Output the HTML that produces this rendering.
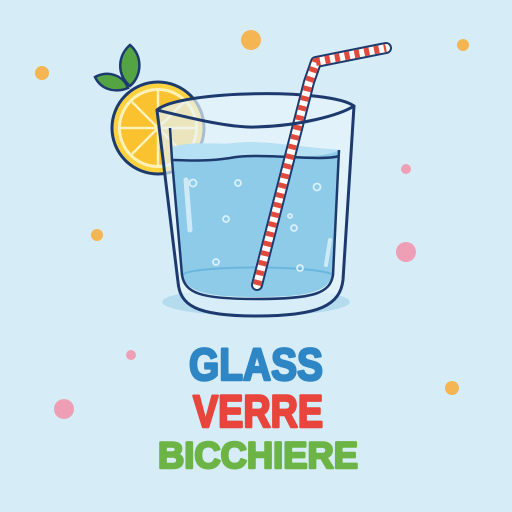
<!DOCTYPE html>
<html><head><meta charset="utf-8"><style>
html,body{margin:0;padding:0;width:512px;height:512px;overflow:hidden;background:#d6edf8}
svg{display:block}
text{font-family:"Liberation Sans",sans-serif;font-weight:bold;stroke-linejoin:round}
</style></head><body>
<svg width="512" height="512" viewBox="0 0 512 512">
<rect width="512" height="512" fill="#d6edf8"/>
<g>
<circle cx="251" cy="40" r="10" fill="#f4b552"/>
<circle cx="42" cy="73" r="7" fill="#f4b552"/>
<circle cx="463" cy="45" r="6" fill="#f4b552"/>
<circle cx="97" cy="235" r="6" fill="#f4b552"/>
<circle cx="452" cy="388" r="7" fill="#f4b552"/>
<circle cx="406" cy="169" r="5" fill="#ef9fb5"/>
<circle cx="406" cy="252" r="10" fill="#ef9fb5"/>
<circle cx="131" cy="355" r="5" fill="#ef9fb5"/>
<circle cx="64" cy="409" r="10" fill="#ef9fb5"/>
</g>
<ellipse cx="256" cy="302" rx="94" ry="14" fill="#b5dcee"/>
<!-- leaves -->
<path d="M130,86 C116,74 118,55 130,45 C143,56 142,76 130,86Z" fill="#54a444" stroke="#1d3a6e" stroke-width="2.5"/>
<path d="M128,88 C113,94 100,88 95,77 C108,70 123,75 128,88Z" fill="#54a444" stroke="#1d3a6e" stroke-width="2.5"/>
<!-- lemon -->
<circle cx="158" cy="128" r="46" fill="#fdd23f" stroke="#1d3a6e" stroke-width="3"/>
<circle cx="158" cy="128" r="40" fill="#fff1b8"/>
<circle cx="158" cy="128" r="37" fill="#f9c22e"/>
<g stroke="#fff1b8" stroke-width="2.5">
<line x1="158" y1="91" x2="158" y2="165"/>
<line x1="121" y1="128" x2="195" y2="128"/>
<line x1="132" y1="102" x2="184" y2="154"/>
<line x1="184" y1="102" x2="132" y2="154"/>
</g>
<circle cx="158" cy="128" r="4" fill="#fff1b8"/>
<!-- glass body -->
<path d="M157,110 C180,90 330,88 354,106 L343,280 C340,305 320,316 256,316 C195,316 180,305 178,282 Z" fill="#e6f4fb" fill-opacity="0.7" stroke="#1d3a6e" stroke-width="3"/>
<path d="M172,147 C200,140 215,146 235,143 C260,140 290,146 339,150 L333,272 C330,290 315,297 256,297 C200,297 184,290 182,272 Z" fill="#8ecbe9"/>
<path d="M172,147 C200,140 215,146 235,143 C260,140 290,146 339,150 C320,162 260,152 230,158 C205,162 185,160 172,160Z" fill="#b6e0f3"/>
<path d="M182,275 C190,265 320,265 333,275" fill="none" stroke="#6bb6de" stroke-width="2"/>
<path d="M172,160 C185,160 205,162 230,158 C260,152 320,162 339,156" fill="none" stroke="#1d3a6e" stroke-width="2.5"/>
<g fill="none" stroke="#d8f0fb" stroke-width="1.8">
<circle cx="193" cy="183" r="3.5"/><circle cx="238" cy="183" r="3"/><circle cx="317" cy="187" r="3.5"/>
<circle cx="226" cy="219" r="3"/><circle cx="290" cy="216" r="2"/><circle cx="294" cy="228" r="3"/>
<circle cx="216" cy="262" r="3"/><circle cx="300" cy="268" r="3"/>
</g>
<!-- straw -->
<path d="M257,285 L309,82 L316,62 L386,48" fill="none" stroke="#1d3a6e" stroke-width="12" stroke-linecap="round" stroke-linejoin="round"/>
<path d="M257,285 L309,82 L316,62 L386,48" fill="none" stroke="#ffffff" stroke-width="8" stroke-linecap="round" stroke-linejoin="round"/>
<path d="M257,285 L309,82 L316,62 L386,48" fill="none" stroke="#e04a3d" stroke-width="8" stroke-dasharray="5 5"/>
<!-- rims -->
<path d="M157,110 C190,118 230,128 256,127 C300,126 340,115 354,106" fill="none" stroke="#1d3a6e" stroke-width="3"/>
<path d="M170,128 L172,160 L182,275 C185,293 200,299 256,299 C315,299 330,293 333,275 L339,150" fill="none" stroke="#1d3a6e" stroke-width="2.5"/>
<path d="M186,180 L190,230" stroke="#cfeaf7" stroke-width="5" stroke-linecap="round"/>
<path d="M330,240 L326,265" stroke="#cfeaf7" stroke-width="4" stroke-linecap="round"/>
<!-- text -->
<text x="189" y="380" font-size="45" fill="#2f86c4" stroke="#2f86c4" stroke-width="2.5" textLength="134" lengthAdjust="spacingAndGlyphs">GLASS</text>
<text x="193" y="427" font-size="45" fill="#e8453c" stroke="#e8453c" stroke-width="2.5" textLength="130" lengthAdjust="spacingAndGlyphs">VERRE</text>
<text x="158" y="468" font-size="37" fill="#6db446" stroke="#6db446" stroke-width="2.5" textLength="200" lengthAdjust="spacingAndGlyphs">BICCHIERE</text>
</svg>
</body></html>
